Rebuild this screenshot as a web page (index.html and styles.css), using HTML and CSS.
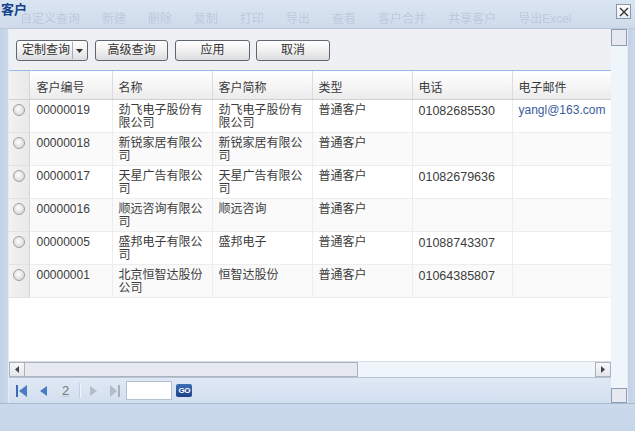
FILE: index.html
```html
<!DOCTYPE html>
<html lang="zh">

<head>
    <meta charset="UTF-8">
    <meta name="viewport" content="width=device-width, initial-scale=1.0">
    <title>客户</title>
    <link rel="stylesheet" href="styles.css">
</head>

<body>

    <div class="win">
        <div class="titleBar">
            <div class="ghostBar" aria-hidden="true">
                <span>自定义查询</span><span>新建</span><span>删除</span><span>复制</span><span>打印</span><span>导出</span><span>查看</span><span>客户合并</span><span>共享客户</span><span>导出Excel</span>
            </div>
            <span class="winTitle">客户</span>
            <span class="closeBtn">
                <svg width="10" height="10" viewBox="0 0 10 10"><path d="M1 1L9 9M9 1L1 9" stroke="#333" stroke-width="1.4"/></svg>
            </span>
        </div>

        <div class="frame">
            <div class="sideStrip"></div>

            <div class="main">
                <div class="toolbar">
                    <span class="btn splitBtn"><span class="btnText">定制查询</span><span class="splitArrow"><svg width="7" height="4" viewBox="0 0 7 4"><path d="M0 0H7L3.5 4Z" fill="#333"/></svg></span></span>
                    <span class="btn btnWide">高级查询</span>
                    <span class="btn btnApply">应用</span>
                    <span class="btn btnCancel">取消</span>
                </div>

                <div class="grid">
                    <div class="gridView">
                        <table class="gridTable">
                            <colgroup>
                                <col class="cRadio">
                                <col class="cCode">
                                <col class="cCol">
                                <col class="cCol">
                                <col class="cCol">
                                <col class="cCol">
                                <col class="cMail">
                            </colgroup>
                            <thead>
                                <tr>
                                    <th class="radioCell"></th>
                                    <th>客户编号</th>
                                    <th>名称</th>
                                    <th>客户简称</th>
                                    <th>类型</th>
                                    <th>电话</th>
                                    <th>电子邮件</th>
                                </tr>
                            </thead>
                            <tbody>
                                <tr>
                                    <td class="radioCell"><span class="radio"></span></td>
                                    <td>00000019</td>
                                    <td class="cn">劲飞电子股份有限公司</td>
                                    <td class="cn">劲飞电子股份有限公司</td>
                                    <td class="cn">普通客户</td>
                                    <td class="phone">01082685530</td>
                                    <td class="mail">yangl@163.com</td>
                                </tr>
                                <tr class="alt">
                                    <td class="radioCell"><span class="radio"></span></td>
                                    <td>00000018</td>
                                    <td class="cn">新锐家居有限公司</td>
                                    <td class="cn">新锐家居有限公司</td>
                                    <td class="cn">普通客户</td>
                                    <td class="phone"></td>
                                    <td></td>
                                </tr>
                                <tr>
                                    <td class="radioCell"><span class="radio"></span></td>
                                    <td>00000017</td>
                                    <td class="cn">天星广告有限公司</td>
                                    <td class="cn">天星广告有限公司</td>
                                    <td class="cn">普通客户</td>
                                    <td class="phone">01082679636</td>
                                    <td></td>
                                </tr>
                                <tr class="alt">
                                    <td class="radioCell"><span class="radio"></span></td>
                                    <td>00000016</td>
                                    <td class="cn">顺远咨询有限公司</td>
                                    <td class="cn">顺远咨询</td>
                                    <td class="cn">普通客户</td>
                                    <td class="phone"></td>
                                    <td></td>
                                </tr>
                                <tr>
                                    <td class="radioCell"><span class="radio"></span></td>
                                    <td>00000005</td>
                                    <td class="cn">盛邦电子有限公司</td>
                                    <td class="cn">盛邦电子</td>
                                    <td class="cn">普通客户</td>
                                    <td class="phone">01088743307</td>
                                    <td></td>
                                </tr>
                                <tr class="alt">
                                    <td class="radioCell"><span class="radio"></span></td>
                                    <td>00000001</td>
                                    <td class="cn">北京恒智达股份公司</td>
                                    <td class="cn">恒智达股份</td>
                                    <td class="cn">普通客户</td>
                                    <td class="phone">01064385807</td>
                                    <td></td>
                                </tr>
                            </tbody>
                        </table>
                    </div>

                    <div class="hScroll">
                        <span class="scrollBtn"><svg width="4" height="7" viewBox="0 0 4 7"><path d="M4 0V7L0 3.5Z" fill="#444"/></svg></span>
                        <span class="hThumb"></span>
                        <span class="hTrack"></span>
                        <span class="scrollBtn"><svg width="4" height="7" viewBox="0 0 4 7"><path d="M0 0V7L4 3.5Z" fill="#444"/></svg></span>
                    </div>
                </div>

                <div class="pager">
                    <svg class="pgIcon" width="12" height="12" viewBox="0 0 12 12"><rect x="0" y="0" width="2" height="12" fill="#3a6cb8"/><path d="M11 0V12L3 6Z" fill="#4a7cc4"/></svg>
                    <svg class="pgIcon pgPrev" width="7" height="10" viewBox="0 0 7 10"><path d="M7 0V10L0 5Z" fill="#4a7cc4"/></svg>
                    <span class="pgNum">2</span>
                    <span class="pgSep"></span>
                    <svg class="pgIcon pgNext" width="7" height="10" viewBox="0 0 7 10"><path d="M0 0V10L7 5Z" fill="#b4bcc8"/></svg>
                    <svg class="pgIcon pgLast" width="12" height="12" viewBox="0 0 12 12"><path d="M1 0V12L8 6Z" fill="#b4bcc8"/><rect x="9" y="0" width="2" height="12" fill="#a6afbd"/></svg>
                    <span class="pgInput"></span>
                    <span class="goBtn">GO</span>
                </div>
            </div>

            <div class="vScroll">
                <span class="vBox vTop"></span>
                <span class="vTrack"></span>
                <span class="vBox vBottom"></span>
            </div>

            <div class="sideStrip rightStrip"></div>
        </div>

        <div class="winFoot"></div>
    </div>

</body>

</html>
```

FILE: styles.css
```css
html {
    font-family: "Liberation Sans", "Noto Sans CJK SC", sans-serif;
    font-size: 12px;
}

body {
    margin: 0;
    width: 635px;
    height: 431px;
    overflow: hidden;
    background-color: #c8d7eb;
}

.win {
    display: flex;
    flex-direction: column;
    height: 431px;
}

.titleBar {
    position: relative;
    height: 28px;
    border-bottom: 1px solid #b9c8dc;
    background: linear-gradient(#dbe5f2, #cfdbeb);
    display: flex;
    justify-content: space-between;
    align-items: flex-start;
    overflow: hidden;
}

/* faint toolbar showing through the window top */
.ghostBar {
    position: absolute;
    left: 20px;
    top: 9px;
    display: flex;
    gap: 22px;
    white-space: nowrap;
    color: #bccadc;
    font-size: 12px;
    filter: blur(0.7px);
}

.winTitle {
    position: relative;
    margin: 2px 0 0 1px;
    font-weight: bold;
    font-size: 13px;
    line-height: 16px;
    color: #15428b;
}

.closeBtn {
    position: relative;
    margin: 4px 4px 0 0;
    width: 13px;
    height: 13px;
    border: 1px solid #8696ab;
    background: linear-gradient(#ffffff, #e6ecf4);
    display: flex;
    align-items: center;
    justify-content: center;
}

.frame {
    display: flex;
    height: 374px;
}

.sideStrip {
    width: 8px;
    background: linear-gradient(90deg, #c2d2e7, #cad8ea);
    border-right: 1px solid #e4ebf5;
}

.rightStrip {
    border-right: none;
    border-left: 1px solid #e4ebf5;
    width: 7px;
}

.main {
    width: 602px;
    display: flex;
    flex-direction: column;
}

.toolbar {
    height: 41px;
    box-sizing: border-box;
    padding: 11px 0 0 7px;
    background-color: #eef0f3;
    display: flex;
    gap: 7px;
}

.btn {
    box-sizing: border-box;
    height: 21px;
    border: 1px solid #5f6670;
    border-radius: 3px;
    background: linear-gradient(#ffffff, #f2f2f2 45%, #dcdde0);
    color: #333;
    display: flex;
    align-items: center;
    justify-content: center;
    line-height: 13px;
}

.splitBtn {
    width: 72px;
    justify-content: flex-start;
    padding-left: 5px;
}

.splitArrow {
    margin-left: 2px;
    height: 17px;
    width: 13px;
    border-left: 1px solid #a9aeb5;
    display: flex;
    align-items: center;
    justify-content: center;
}

.btnWide {
    width: 73px;
}

.btnApply {
    width: 75px;
}

.btnCancel {
    width: 74px;
    margin-left: -1px;
}

.grid {
    height: 307px;
    border-top: 1px solid #99bbe8;
    box-sizing: border-box;
    background-color: #fff;
    display: flex;
    flex-direction: column;
}

.gridView {
    flex: 1;
    overflow: hidden;
}

.gridTable {
    table-layout: fixed;
    border-collapse: collapse;
    width: 602px;
    color: #3c3c3c;
}

.cRadio {
    width: 20px;
}

.cCode {
    width: 83px;
}

.cCol {
    width: 100px;
}

.cMail {
    width: 99px;
}

.gridTable th {
    height: 28px;
    box-sizing: border-box;
    padding: 11px 6px 0;
    text-align: left;
    vertical-align: top;
    font-weight: normal;
    line-height: 13px;
    background: linear-gradient(#ffffff, #f4f4f4 60%, #ebebeb);
    border-left: 1px solid #dcdcdc;
    border-bottom: 1px solid #d0d0d0;
    white-space: nowrap;
}

.gridTable td {
    height: 33px;
    box-sizing: border-box;
    padding: 2px 4px 0 6px;
    vertical-align: top;
    line-height: 13px;
    border-left: 1px solid #ededed;
    border-bottom: 1px solid #ededed;
    overflow: hidden;
}

.gridTable .cn {
    font-family: "Noto Sans CJK SC", sans-serif;
    font-size: 12px;
    line-break: anywhere;
}

.gridTable td:first-child + td {
    padding-left: 7px;
    padding-top: 4px;
}

.gridTable th:first-child + th {
    padding-left: 7px;
}

.gridTable .phone {
    padding-top: 5px;
    font-size: 12.5px;
}

.gridTable .mail {
    padding-top: 4px;
    padding-right: 0;
    color: #3a5c9c;
    white-space: nowrap;
}

.alt td {
    background-color: #fafafa;
}

.gridTable .radioCell {
    padding: 0;
    border-left: none;
    border-right: 1px solid #d6d6d6;
    background: linear-gradient(90deg, #f2f2f2, #e9e9e9);
    text-align: center;
}

.gridTable td.radioCell {
    padding-top: 4px;
    border-bottom-color: #e2e2e2;
}

.radio {
    display: inline-block;
    width: 12px;
    height: 12px;
    box-sizing: border-box;
    border-radius: 50%;
    border: 1px solid #a0a0a0;
    background: radial-gradient(circle at 45% 40%, #ffffff, #dcdcdc 70%, #c4c4c4);
}

.hScroll {
    height: 16px;
    display: flex;
    background-color: #eef6fc;
    border-top: 1px solid #d8dee6;
    box-sizing: border-box;
}

.scrollBtn {
    width: 16px;
    box-sizing: border-box;
    border: 1px solid #aab2bd;
    background: linear-gradient(#f6f7f9, #e2e6ec);
    display: flex;
    align-items: center;
    justify-content: center;
}

.hThumb {
    width: 333px;
    box-sizing: border-box;
    border: 1px solid #aab2bd;
    border-left: none;
    background-color: #e6e9ef;
}

.hTrack {
    flex: 1;
}

.pager {
    height: 26px;
    box-sizing: border-box;
    border-top: 1px solid #b6c4d6;
    background: linear-gradient(#e0e9f5, #d2dfef);
    display: flex;
    align-items: center;
    padding-left: 7px;
}

.pgIcon {
    display: block;
}

.pgPrev {
    margin-left: 12px;
}

.pgNum {
    margin-left: 15px;
    color: #777;
    font-size: 13px;
    text-decoration: underline;
    text-decoration-color: #c4ccd8;
}

.pgSep {
    margin-left: 10px;
    width: 1px;
    height: 15px;
    background-color: #c3cfde;
    border-right: 1px solid #f0f4fa;
}

.pgNext {
    margin-left: 9px;
}

.pgLast {
    margin-left: 12px;
}

.pgInput {
    margin-left: 5px;
    width: 46px;
    height: 19px;
    box-sizing: border-box;
    border: 1px solid #b5c0cf;
    background-color: #fff;
}

.goBtn {
    margin-left: 4px;
    width: 16px;
    height: 13px;
    border-radius: 2px;
    background: linear-gradient(#3f6fb6, #1d3f85);
    color: #fff;
    font-size: 8px;
    font-weight: bold;
    line-height: 13px;
    text-align: center;
    letter-spacing: -0.5px;
}

.vScroll {
    width: 16px;
    display: flex;
    flex-direction: column;
    background-color: #eef6fc;
}

.vBox {
    box-sizing: border-box;
    border: 1px solid #8e9db2;
    background-color: #e6e9ef;
}

.vTop {
    height: 17px;
}

.vTrack {
    flex: 1;
}

.vBottom {
    height: 15px;
}

.winFoot {
    flex: 1;
    border-top: 1px solid #aab9ce;
    background: linear-gradient(#cbd9ec, #c6d5e9);
}
```
